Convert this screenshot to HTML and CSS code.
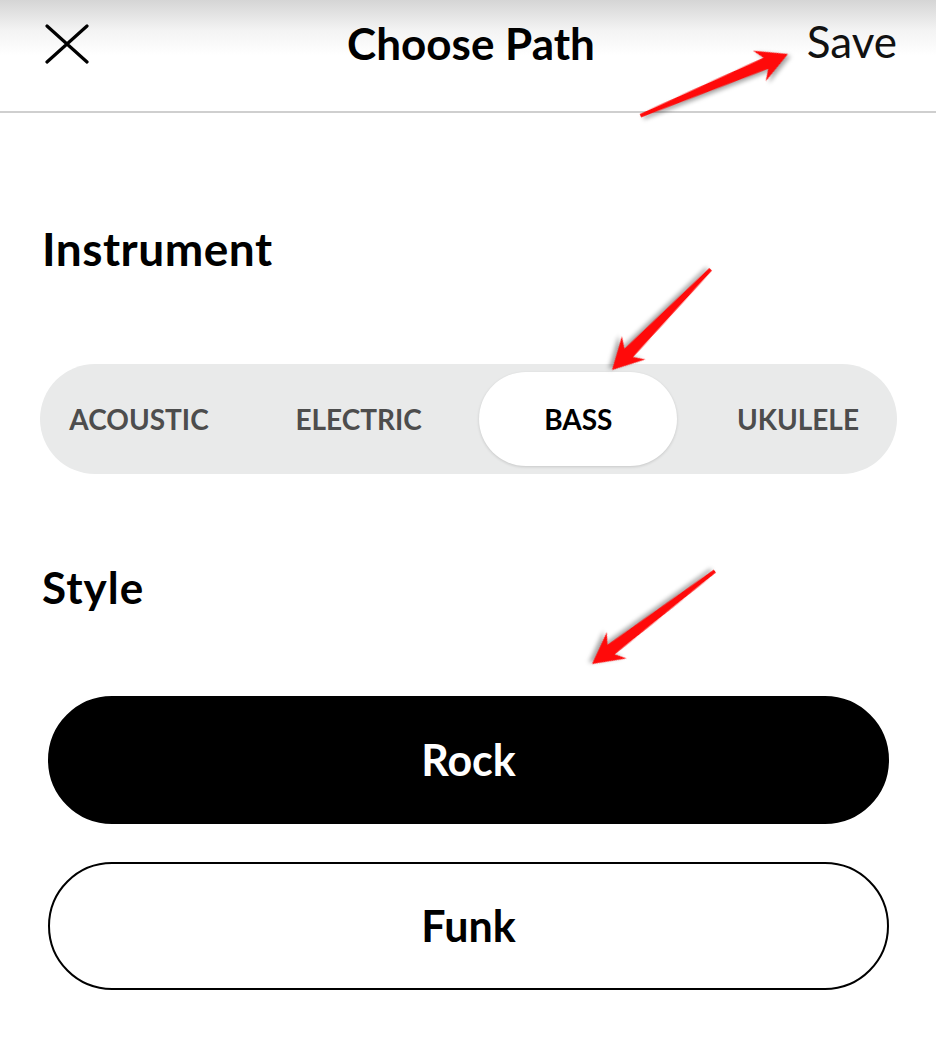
FILE: index.html
```html
<!DOCTYPE html>
<html lang="en">
<head>
  <meta charset="UTF-8" />
  <title>Choose Path</title>
  <link rel="stylesheet" href="styles.css">
</head>
<body>
<div class="page">

  <header class="topbar">
    <button class="close" aria-label="Close">
      <svg width="44" height="40" viewBox="0 0 44 40">
        <path d="M2 2 L42 38 M42 2 L2 38" stroke="#000" stroke-width="3.2" stroke-linecap="round" fill="none"/>
      </svg>
    </button>
    <h1 class="title">Choose Path</h1>
    <button class="save">Save</button>
  </header>

  <main class="content">
    <h2 class="heading heading-instrument">Instrument</h2>

    <div class="segments">
      <div class="segment">ACOUSTIC</div>
      <div class="segment">ELECTRIC</div>
      <div class="segment selected">BASS</div>
      <div class="segment">UKULELE</div>
    </div>

    <h2 class="heading heading-style">Style</h2>

    <div class="styles">
      <button class="style-btn active">Rock</button>
      <button class="style-btn">Funk</button>
    </div>
  </main>

  <!-- annotation arrows -->
  <svg class="arrows" width="936" height="1052" viewBox="0 0 936 1052">
    <g transform="translate(788 54) rotate(-22.7)">
      <polygon points="0,0 -31,-16.5 -24,-6 -160,-1.8 -160,1.8 -24,6 -31,16.5"/>
    </g>
    <g transform="translate(612 370) rotate(134.4)">
      <polygon points="0,0 -31,-16.5 -24,-6 -141,-1.8 -141,1.8 -24,6 -31,16.5"/>
    </g>
    <g transform="translate(592 664) rotate(142.9)">
      <polygon points="0,0 -31,-16.5 -24,-6 -154,-1.8 -154,1.8 -24,6 -31,16.5"/>
    </g>
  </svg>

</div>
</body>
</html>
```

FILE: styles.css
```css
body {
  margin: 0;
  background: #fff;
  font-family: Lato, "Liberation Sans", sans-serif;
  color: #000;
}
.page {
  position: relative;
  width: 936px;
  height: 1052px;
  overflow: hidden;
}
button {
  font-family: inherit;
  border: none;
  background: none;
  padding: 0;
  cursor: pointer;
}

/* top bar */
.topbar {
  height: 111px;
  border-bottom: 2px solid #cfcfcf;
  background: linear-gradient(#d5d5d5, #f3f3f3 30px, #fff 55px);
  display: grid;
  grid-template-columns: 1fr auto 1fr;
  align-items: start;
  padding: 0 39px 0 45px;
}
.close {
  margin-top: 24px;
  justify-self: start;
  line-height: 0;
}
.title {
  margin: 17px 0 0;
  font-size: 44px;
  font-weight: 700;
  line-height: 1.2;
}
.save {
  justify-self: end;
  margin-top: 15px;
  font-size: 44px;
  font-weight: 400;
  line-height: 1.2;
  color: #111;
}

/* content */
.content {
  padding: 0 39px 0 40px;
}
.heading {
  margin: 0;
  padding-left: 2px;
  font-weight: 700;
  line-height: 1.2;
}
.heading-instrument {
  margin-top: 108px;
  font-size: 46px;
  letter-spacing: 0.5px;
}
.heading-style {
  margin-top: 87px;
  font-size: 44px;
  letter-spacing: 1px;
}

.segments {
  margin-top: 88px;
  height: 94px;
  padding: 8px 0;
  background: #e9eaea;
  border-radius: 55px;
  display: flex;
  justify-content: space-between;
}
.segment {
  width: 198px;
  border-radius: 47px;
  display: flex;
  align-items: center;
  justify-content: center;
  font-size: 28px;
  font-weight: 700;
  color: #4d4d4d;
}
.segment.selected {
  background: #fff;
  color: #000;
  box-shadow: 0 1px 3px rgba(0, 0, 0, 0.15);
}

.styles {
  margin-top: 82px;
  padding: 0 8px;
  display: flex;
  flex-direction: column;
  gap: 38px;
}
.style-btn {
  height: 128px;
  border-radius: 64px;
  border: 2px solid #000;
  background: #fff;
  color: #000;
  font-size: 43px;
  font-weight: 700;
}
.style-btn.active {
  background: #000;
  color: #fff;
}

/* annotation arrows */
.arrows {
  position: absolute;
  top: 0;
  left: 0;
  pointer-events: none;
}
.arrows polygon {
  fill: #ff0a0a;
  filter: drop-shadow(2px 3px 2px rgba(0, 0, 0, 0.35));
}
```
